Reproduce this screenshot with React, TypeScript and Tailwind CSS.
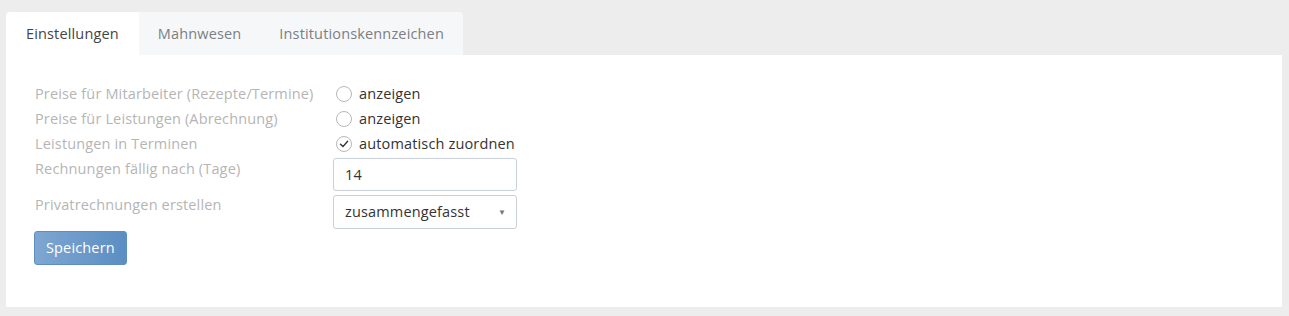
import React from 'react';

const font = { fontFamily: '"Open Sans", "Liberation Sans", sans-serif' };

function Radio() {
    return <span className="inline-block w-[16px] h-[16px] rounded-full border border-[#b8b8b8] bg-white" />;
}

function Check() {
    return (
        <span className="inline-flex items-center justify-center w-[16px] h-[16px] rounded-full border border-[#b8b8b8] bg-white">
            <svg width="10" height="10" viewBox="0 0 10 10" fill="none">
                <path d="M1.5 5.2 L4 7.6 L8.6 2.2" stroke="#333" strokeWidth="1.4" strokeLinecap="round" strokeLinejoin="round" />
            </svg>
        </span>
    );
}

export default function App() {
    const tabs = ['Einstellungen', 'Mahnwesen', 'Institutionskennzeichen'];

    return (
        <div className="w-[1289px] h-[316px] bg-[#ededed] pt-[12px] px-[6px] tracking-[0.15px]" style={font}>
            {/* Tabs */}
            <div className="flex">
                <div className="flex rounded-t-[4px] overflow-hidden bg-[#f6f7f9]">
                    {tabs.map((t, i) => (
                        <div
                            key={t}
                            className={
                                i === 0
                                    ? 'h-[43px] flex items-center px-[20px] bg-white text-[#444] text-[14.5px] rounded-tl-[4px]'
                                    : 'h-[43px] flex items-center px-[19px] text-[#7a7f85] text-[14.5px]'
                            }
                        >
                            {t}
                        </div>
                    ))}
                </div>
            </div>

            {/* Panel */}
            <div className="bg-white w-[1276px] h-[252px] pl-[29px] pt-[26px]">
                <div className="grid grid-cols-[298px_184px] text-[14.5px]">
                    <div className="h-[25px] flex items-center text-[#b5b5b5]">Preise für Mitarbeiter (Rezepte/Termine)</div>
                    <div className="h-[25px] flex items-center gap-[7px] pl-[3px] text-[#333]"><Radio />anzeigen</div>

                    <div className="h-[25px] flex items-center text-[#b5b5b5]">Preise für Leistungen (Abrechnung)</div>
                    <div className="h-[25px] flex items-center gap-[7px] pl-[3px] text-[#333]"><Radio />anzeigen</div>

                    <div className="h-[25px] flex items-center text-[#b5b5b5]">Leistungen in Terminen</div>
                    <div className="h-[25px] flex items-center gap-[7px] pl-[3px] text-[#333]"><Check />automatisch zuordnen</div>

                    <div className="pt-[2px] text-[#b5b5b5]">Rechnungen fällig nach (Tage)</div>
                    <div className="h-[33px] mt-[2px] border border-[#c9d0d8] rounded-[3px] flex items-center px-[11px] text-[#333]">14</div>

                    <div className="pt-[3px] text-[#b5b5b5]">Privatrechnungen erstellen</div>
                    <div className="h-[34px] mt-[4px] border border-[#c9d0d8] rounded-[3px] flex items-center justify-between pl-[11px] pr-[10px] text-[#333]">
                        <span>zusammengefasst</span>
                        <span className="text-[8px] text-[#777]">▼</span>
                    </div>
                </div>

                <button className="-ml-[1px] mt-[2px] h-[34px] px-[11px] rounded-[3px] border border-[#5f8fc0] bg-gradient-to-r from-[#7ea6d1] to-[#5b8ec3] text-white text-[14.5px]">
                    Speichern
                </button>
            </div>
        </div>
    );
}
